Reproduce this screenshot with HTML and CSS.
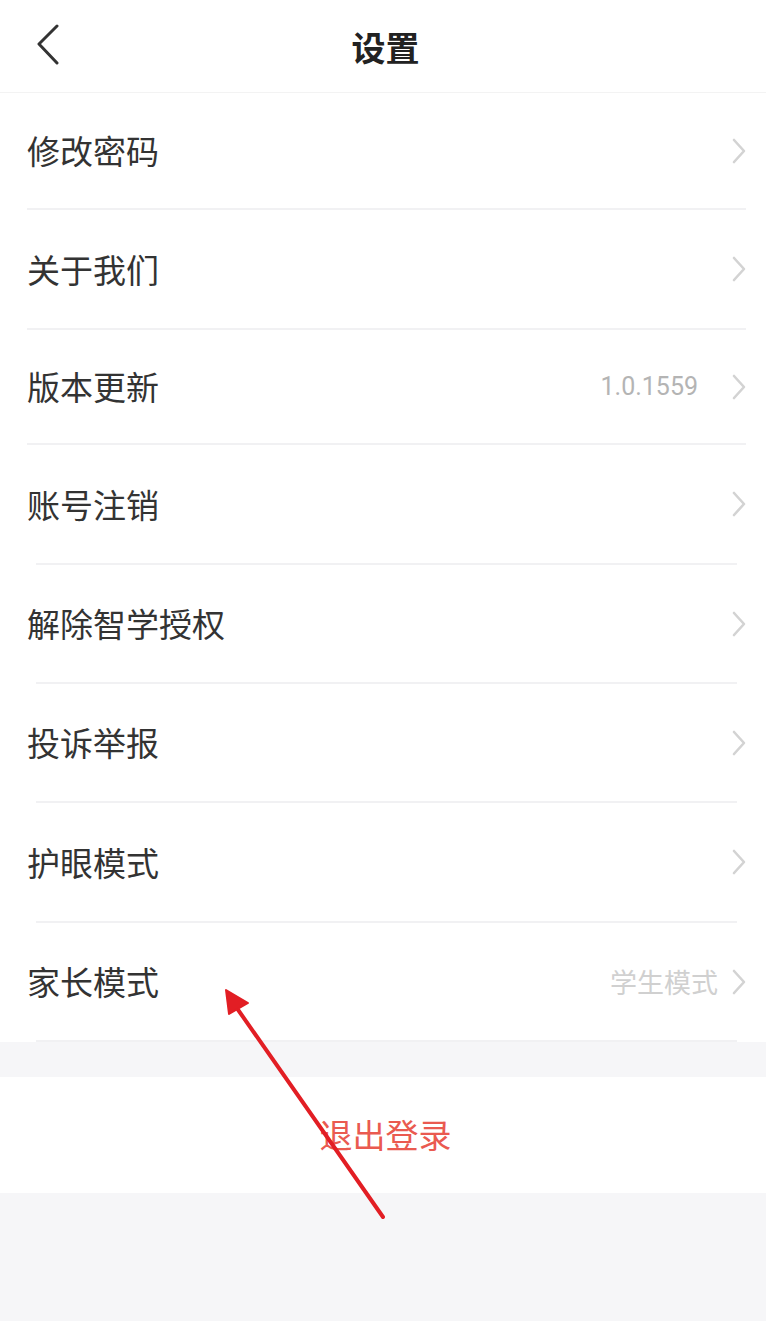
FILE: index.html
```html
<!DOCTYPE html>
<html lang="zh-CN">
<head>
<meta charset="utf-8">
<title>设置</title>
<link rel="stylesheet" href="styles.css">
</head>
<body>
<div class="page">
  <header class="topbar">
    <div class="back">
      <svg width="24" height="42" viewBox="0 0 24 42"><polyline points="20,2 2,20 20,39" fill="none" stroke="#333" stroke-width="3" stroke-linecap="round" stroke-linejoin="round"/></svg>
    </div>
    <h1 class="title">设置</h1>
    <div class="spacer"></div>
  </header>

  <ul class="list">
    <li class="row"><span class="label">修改密码</span><svg class="arrow" width="14" height="26" viewBox="0 0 14 26"><polyline points="2,2 12,13 2,24" fill="none" stroke="#d3d3d3" stroke-width="2.6" stroke-linecap="round" stroke-linejoin="round"/></svg></li>
    <li class="row"><span class="label">关于我们</span><svg class="arrow" width="14" height="26" viewBox="0 0 14 26"><polyline points="2,2 12,13 2,24" fill="none" stroke="#d3d3d3" stroke-width="2.6" stroke-linecap="round" stroke-linejoin="round"/></svg></li>
    <li class="row"><span class="label">版本更新</span><span class="value version">1.0.1559</span><svg class="arrow" width="14" height="26" viewBox="0 0 14 26"><polyline points="2,2 12,13 2,24" fill="none" stroke="#d3d3d3" stroke-width="2.6" stroke-linecap="round" stroke-linejoin="round"/></svg></li>
    <li class="row"><span class="label">账号注销</span><svg class="arrow" width="14" height="26" viewBox="0 0 14 26"><polyline points="2,2 12,13 2,24" fill="none" stroke="#d3d3d3" stroke-width="2.6" stroke-linecap="round" stroke-linejoin="round"/></svg></li>
    <li class="row"><span class="label">解除智学授权</span><svg class="arrow" width="14" height="26" viewBox="0 0 14 26"><polyline points="2,2 12,13 2,24" fill="none" stroke="#d3d3d3" stroke-width="2.6" stroke-linecap="round" stroke-linejoin="round"/></svg></li>
    <li class="row"><span class="label">投诉举报</span><svg class="arrow" width="14" height="26" viewBox="0 0 14 26"><polyline points="2,2 12,13 2,24" fill="none" stroke="#d3d3d3" stroke-width="2.6" stroke-linecap="round" stroke-linejoin="round"/></svg></li>
    <li class="row"><span class="label">护眼模式</span><svg class="arrow" width="14" height="26" viewBox="0 0 14 26"><polyline points="2,2 12,13 2,24" fill="none" stroke="#d3d3d3" stroke-width="2.6" stroke-linecap="round" stroke-linejoin="round"/></svg></li>
    <li class="row"><span class="label">家长模式</span><span class="value mode">学生模式</span><svg class="arrow" width="14" height="26" viewBox="0 0 14 26"><polyline points="2,2 12,13 2,24" fill="none" stroke="#d3d3d3" stroke-width="2.6" stroke-linecap="round" stroke-linejoin="round"/></svg></li>
  </ul>

  <div class="logout">退出登录</div>

  <svg class="annotation" width="766" height="1321" viewBox="0 0 766 1321">
    <line x1="383" y1="1217" x2="234" y2="1004" stroke="#e21e24" stroke-width="4" stroke-linecap="round"/>
    <polygon points="226,990 229,1014 248,1003" fill="#e21e24" stroke="#e21e24" stroke-width="2" stroke-linejoin="round"/>
  </svg>
</div>
</body>
</html>
```

FILE: styles.css
```css
html, body {
  margin: 0;
  padding: 0;
}
body {
  background: #f6f6f8;
  font-family: "Noto Sans CJK SC", "Noto Sans", Roboto, sans-serif;
  color: #333;
}
.page {
  position: relative;
  min-height: 1321px;
}
.topbar {
  height: 92px;
  background: #fff;
  border-bottom: 1px solid #f3f3f3;
  display: grid;
  grid-template-columns: 1fr auto 1fr;
  align-items: center;
}
.back {
  padding-left: 37px;
  display: flex;
  align-items: center;
  height: 100%;
  padding-bottom: 2px;
}
.title {
  margin: 0;
  font-size: 34px;
  font-weight: 700;
  color: #222;
  line-height: 1;
  padding-top: 2px;
  padding-left: 5px;
}
.list {
  list-style: none;
  margin: 0;
  padding: 0 20px 0 27px;
  background: #fff;
}
.row {
  display: flex;
  align-items: center;
  height: 119px;
  box-sizing: border-box;
  padding-bottom: 2px;
  background: linear-gradient(#f1f1f3, #f1f1f3) no-repeat center bottom / calc(100% - 18px) 2px;
}
.row:nth-child(1) { height: 117px; background-size: 100% 2px; }
.row:nth-child(2) { height: 120px; background-size: 100% 2px; }
.row:nth-child(3) { height: 115px; background-size: 100% 2px; }
.row:nth-child(4) { height: 120px; }
.row:nth-child(7) { height: 120px; }
.label {
  flex: 1;
  font-size: 33px;
  line-height: 1;
  color: #333;
}
.value {
  line-height: 1;
}
.version {
  font-family: Roboto, "Noto Sans", sans-serif;
  font-size: 25px;
  margin-right: 34px;
  color: #b4b4b4;
}
.mode {
  font-size: 27px;
  margin-right: 14px;
  color: #d0d0d0;
}
.arrow {
  flex: none;
  display: block;
}
.logout {
  margin-top: 35px;
  height: 116px;
  background: #fff;
  display: flex;
  align-items: center;
  justify-content: center;
  font-size: 33px;
  color: #ea5a50;
  padding: 0 0 2px 5px;
  box-sizing: border-box;
}
.annotation {
  position: absolute;
  left: 0;
  top: 0;
  pointer-events: none;
}
```
